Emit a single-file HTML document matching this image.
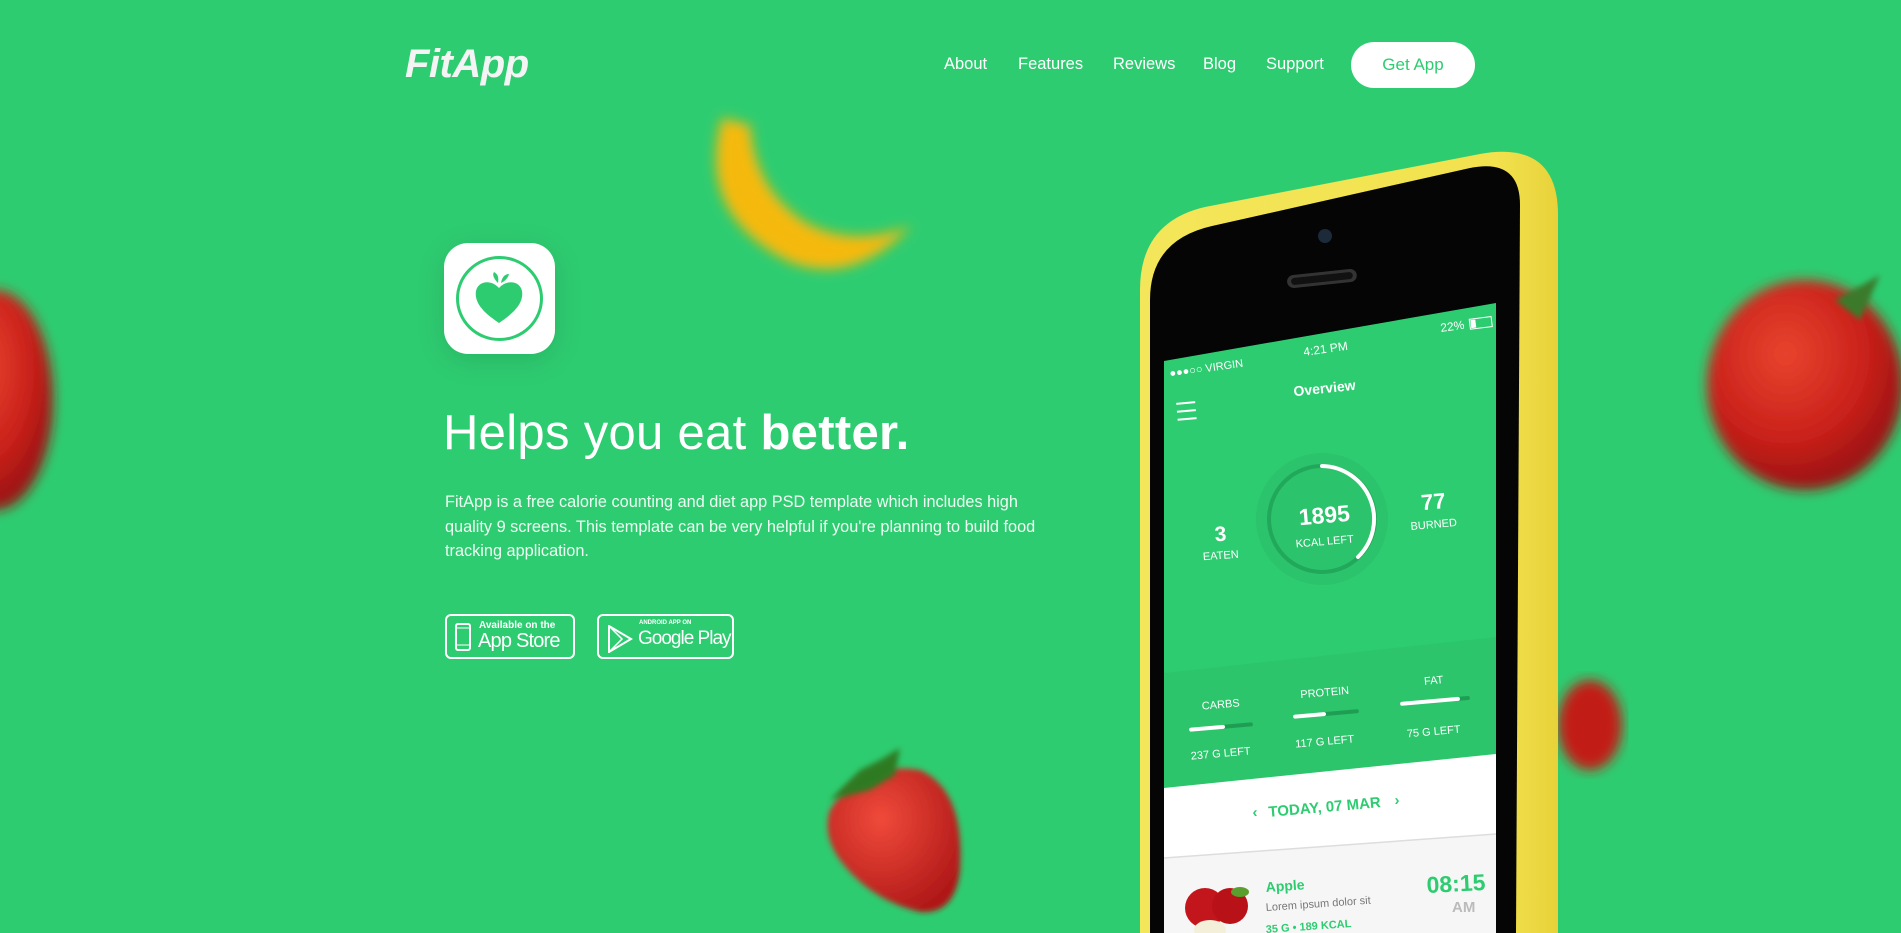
<!DOCTYPE html>
<html><head><meta charset="utf-8"><style>
*{margin:0;padding:0;box-sizing:border-box}
body{width:1901px;height:933px;overflow:hidden;background:#2ecc71;font-family:"Liberation Sans","DejaVu Sans",sans-serif;color:#fff;position:relative}
.abs{position:absolute}
.logo{left:405px;top:42px;font-size:40px;font-weight:bold;font-style:italic;color:#f4f4f4;letter-spacing:-0.5px}
.nav a{position:absolute;top:55px;font-size:16.5px;color:#fff;text-decoration:none}
.btn{left:1351px;top:42px;width:124px;height:46px;border-radius:23px;background:#fff;color:#2ecc71;font-size:17px;text-align:center;line-height:46px}
.icon{left:444px;top:243px;width:111px;height:111px;border-radius:24px;background:#fff;box-shadow:0 6px 30px rgba(0,0,0,.12)}
h1{position:absolute;left:443px;top:405px;font-size:49px;font-weight:normal;letter-spacing:0.3px;white-space:nowrap}
h1 b{font-weight:bold}
p.desc{position:absolute;left:445px;top:490px;width:600px;font-size:16.3px;line-height:24.5px;color:#eefbf2}
.store{position:absolute;top:614px;height:45px;border:2px solid #fff;border-radius:6px;white-space:nowrap}
</style></head><body>
<svg class="abs" style="left:0;top:0" width="1901" height="933">
<defs>
<filter id="b6"><feGaussianBlur stdDeviation="6"/></filter>
<filter id="b3"><feGaussianBlur stdDeviation="3"/></filter>
<radialGradient id="tom" cx="40%" cy="35%" r="70%"><stop offset="0" stop-color="#e8442e"/><stop offset="0.6" stop-color="#c9201a"/><stop offset="1" stop-color="#8e1010"/></radialGradient>
<radialGradient id="str" cx="40%" cy="35%" r="70%"><stop offset="0" stop-color="#f04a3a"/><stop offset="1" stop-color="#b01818"/></radialGradient>
<linearGradient id="yel" x1="0" x2="1"><stop offset="0" stop-color="#f4e65a"/><stop offset="0.85" stop-color="#f2e24e"/><stop offset="1" stop-color="#e8d23a"/></linearGradient>
</defs>
<path d="M722,118 Q695,215 790,262 Q850,285 905,232 L912,226 Q850,248 805,222 Q755,190 750,125 Z" fill="#f5b90c" filter="url(#b6)"/>
<ellipse cx="-5" cy="400" rx="58" ry="110" fill="url(#tom)" filter="url(#b6)"/>
<ellipse cx="1805" cy="385" rx="98" ry="105" fill="url(#tom)" filter="url(#b6)"/>
<path d="M1835,300 L1880,275 L1860,320 Z" fill="#3a7a2a" filter="url(#b3)"/>
<ellipse cx="1590" cy="725" rx="32" ry="45" fill="#c21a18" filter="url(#b6)"/>
<path d="M830,810 Q860,760 920,770 Q965,790 960,870 Q955,915 920,912 Q870,900 840,860 Q822,835 830,810 Z" fill="url(#str)" filter="url(#b3)"/>
<path d="M830,800 L860,770 L880,760 L900,748 L895,775 L870,790 Z" fill="#2e7a24" filter="url(#b3)"/>

<path d="M1140,933 L1140,290 Q1140,222 1205,207 L1480,154 Q1558,140 1558,215 L1558,933 Z" fill="url(#yel)"/>
<path d="M1150,933 L1150,300 Q1150,240 1212,226 L1470,168 Q1520,158 1520,205 L1516,933 Z" fill="#050505"/>
<circle cx="1325" cy="236" r="7" fill="#1d2a3a"/>
<g transform="rotate(-6 1322 279)"><rect x="1287" y="272" width="70" height="13" rx="6.5" fill="#333"/><rect x="1291" y="275" width="62" height="7" rx="3.5" fill="#111"/></g>
<polygon points="1164,361 1496,303 1496,933 1164,933" fill="#2ecc71"/>
<polygon points="1164,673 1496,637 1496,754 1164,788" fill="#2cc56c"/>
<polygon points="1164,788 1496,754 1496,834 1164,858" fill="#fff"/>
<polygon points="1164,858 1496,834 1496,933 1164,933" fill="#f6f6f6"/>
<line x1="1164" y1="858" x2="1496" y2="834" stroke="#ddd" stroke-width="1.5"/>
<circle cx="1322" cy="519" r="66" fill="#2bc36b"/>
<circle cx="1322" cy="519" r="53" fill="none" stroke="#22a85a" stroke-width="4"/>
<path d="M1322,466 A53,53 0 0 1 1358,557" fill="none" stroke="#fff" stroke-width="4" stroke-linecap="round"/>
<g transform="rotate(-5 1186 412)" stroke="#fff" stroke-width="2"><line x1="1177" y1="403" x2="1196" y2="403"/><line x1="1177" y1="411" x2="1196" y2="411"/><line x1="1177" y1="419" x2="1196" y2="419"/></g>
<g transform="rotate(-5 1221 727)"><rect x="1189" y="725" width="64" height="4" rx="2" fill="#1f9e53"/><rect x="1189" y="725" width="36" height="4" rx="2" fill="#fff"/></g>
<g transform="rotate(-5 1325 714)"><rect x="1293" y="712" width="66" height="4" rx="2" fill="#1f9e53"/><rect x="1293" y="712" width="33" height="4" rx="2" fill="#fff"/></g>
<g transform="rotate(-5 1434 701)"><rect x="1400" y="699" width="70" height="4" rx="2" fill="#1f9e53"/><rect x="1400" y="699" width="60" height="4" rx="2" fill="#fff"/></g>
<g transform="rotate(-7 1480 325)"><rect x="1470" y="318" width="22" height="10" fill="none" stroke="#fff" stroke-width="1"/><rect x="1471" y="319" width="5" height="8" fill="#fff"/></g>
<circle cx="1205" cy="908" r="20" fill="#c3161c"/><circle cx="1230" cy="906" r="18" fill="#b81218"/><ellipse cx="1240" cy="892" rx="9" ry="5" fill="#5a9e2e"/>
<ellipse cx="1210" cy="930" rx="16" ry="10" fill="#f3efd8"/>
<g font-family="Liberation Sans, sans-serif" fill="#fff">
<text x="1170" y="377" font-size="11" transform="rotate(-8 1170 377)">●●●○○ VIRGIN</text>
<text x="1304" y="356" font-size="12" transform="rotate(-8 1304 356)">4:21 PM</text>
<text x="1441" y="332" font-size="12" transform="rotate(-8 1441 332)">22%</text>
<text x="1325" y="393" font-size="14" font-weight="bold" text-anchor="middle" transform="rotate(-6 1325 393)">Overview</text>
<text x="1325" y="523" font-size="23" font-weight="bold" text-anchor="middle" transform="rotate(-5 1325 523)">1895</text>
<text x="1325" y="545" font-size="11" text-anchor="middle" transform="rotate(-5 1325 545)">KCAL LEFT</text>
<text x="1221" y="541" font-size="21" font-weight="bold" text-anchor="middle" transform="rotate(-4 1221 541)">3</text>
<text x="1221" y="559" font-size="11" text-anchor="middle" transform="rotate(-4 1221 559)">EATEN</text>
<text x="1434" y="509" font-size="22" font-weight="bold" text-anchor="middle" transform="rotate(-5 1434 509)">77</text>
<text x="1434" y="528" font-size="11" text-anchor="middle" transform="rotate(-5 1434 528)">BURNED</text>
<text x="1221" y="708" font-size="11" text-anchor="middle" transform="rotate(-5 1221 708)">CARBS</text>
<text x="1221" y="757" font-size="11" text-anchor="middle" transform="rotate(-5 1221 757)">237 G LEFT</text>
<text x="1325" y="696" font-size="11" text-anchor="middle" transform="rotate(-5 1325 696)">PROTEIN</text>
<text x="1325" y="745" font-size="11" text-anchor="middle" transform="rotate(-5 1325 745)">117 G LEFT</text>
<text x="1434" y="684" font-size="11" text-anchor="middle" transform="rotate(-5 1434 684)">FAT</text>
<text x="1434" y="735" font-size="11" text-anchor="middle" transform="rotate(-5 1434 735)">75 G LEFT</text>
</g>
<g font-family="Liberation Sans, sans-serif" fill="#2ecc71" font-weight="bold">
<text x="1325" y="812" font-size="15" text-anchor="middle" transform="rotate(-5 1325 812)">TODAY, 07 MAR</text>
<text x="1255" y="817" font-size="15" text-anchor="middle">‹</text>
<text x="1397" y="805" font-size="15" text-anchor="middle">›</text>
<text x="1266" y="892" font-size="14" transform="rotate(-4 1266 892)">Apple</text>
<text x="1427" y="893" font-size="23" transform="rotate(-3 1427 893)">08:15</text>
<text x="1266" y="933" font-size="11" transform="rotate(-4 1266 933)">35 G  •  189 KCAL</text>
</g>
<text x="1266" y="911" font-size="11" fill="#777" font-family="Liberation Sans, sans-serif" transform="rotate(-4 1266 911)">Lorem ipsum dolor sit</text>
<text x="1452" y="912" font-size="15" fill="#bbb" font-weight="bold" font-family="Liberation Sans, sans-serif">AM</text>
</svg>

<div class="abs logo">FitApp</div>
<div class="nav"><a style="left:944px">About</a><a style="left:1018px">Features</a><a style="left:1113px">Reviews</a><a style="left:1203px">Blog</a><a style="left:1266px">Support</a></div>
<div class="abs btn">Get App</div>

<div class="abs icon">
<svg width="111" height="111" viewBox="0 0 111 111"><ellipse cx="55.5" cy="55.5" rx="42" ry="41" fill="none" stroke="#2ecc71" stroke-width="3"/>
<path d="M55,80 C40,70 30,60 32,48 C34,38 47,36 55,45 C63,36 76,38 78,48 C80,60 70,70 55,80 Z" fill="#2ecc71"/>
<path d="M54,40 C50,36 48,32 50,29 C54,31 55,35 54,40 Z M57,40 C58,34 61,31 65,31 C64,35 61,38 57,40 Z" fill="#2ecc71"/></svg>
</div>
<h1>Helps you eat <b>better.</b></h1>
<p class="desc">FitApp is a free calorie counting and diet app PSD template which includes high quality 9 screens. This template can be very helpful if you're planning to build food tracking application.</p>

<div class="store" style="left:445px;width:130px">
<svg class="abs" style="left:8px;top:7px" width="16" height="28"><rect x="1" y="1" width="14" height="26" rx="2" fill="none" stroke="#fff" stroke-width="2"/><line x1="2" y1="5" x2="14" y2="5" stroke="#fff"/><line x1="2" y1="22" x2="14" y2="22" stroke="#fff"/></svg>
<div class="abs" style="left:32px;top:4px;font-size:10px;font-weight:bold">Available on the</div>
<div class="abs" style="left:31px;top:14px;font-size:20px;letter-spacing:-0.8px">App Store</div>
</div>
<div class="store" style="left:597px;width:137px">
<svg class="abs" style="left:8px;top:9px" width="26" height="28"><path d="M2,1 L24,14 L2,27 Z" fill="none" stroke="#fff" stroke-width="2"/><path d="M2,1 L15,14 L2,27" fill="none" stroke="#fff" stroke-width="1.5"/></svg>
<div class="abs" style="left:40px;top:4px;font-size:6px;font-weight:bold">ANDROID APP ON</div>
<div class="abs" style="left:39px;top:12px;font-size:19px;letter-spacing:-1px">Google Play</div>
</div>
</body></html>
